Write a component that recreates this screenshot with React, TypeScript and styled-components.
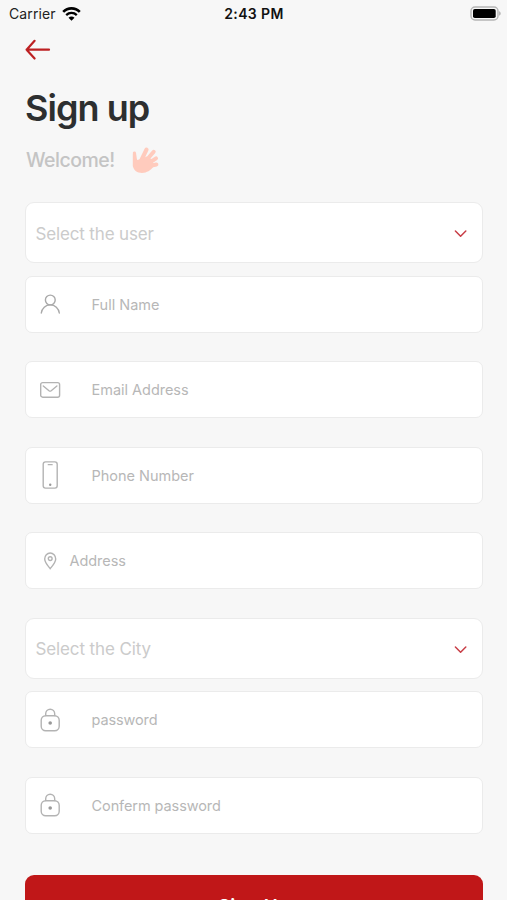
import React from "react";
import styled, { createGlobalStyle } from "styled-components";

const GlobalStyle = createGlobalStyle`
  * { box-sizing: border-box; }
  html, body { margin: 0; background: #f7f7f7; }
  body { font-family: Inter, "Liberation Sans", sans-serif; overflow: hidden; }
`;

const Screen = styled.main`
  width: 507px;
  height: 900px;
  overflow: hidden;
  background: #f7f7f7;
`;

const StatusBar = styled.div`
  display: grid;
  grid-template-columns: 1fr auto 1fr;
  align-items: center;
  height: 27px;
  padding: 0 6px 0 9px;
  color: #111;
`;

const Carrier = styled.div`
  display: flex;
  align-items: center;
  gap: 6px;
  font-size: 14px;
  letter-spacing: 0.1px;
  color: #222;
`;

const Clock = styled.div`
  padding-right: 2px;
  font-size: 14px;
  font-weight: 600;
  letter-spacing: 0.4px;
`;

const BatterySlot = styled.div`
  display: flex;
  justify-content: flex-end;
`;

const Content = styled.div`
  display: flex;
  flex-direction: column;
  padding: 0 24.5px 0 25px;
`;

const BackButton = styled.button`
  display: flex;
  width: 26px;
  height: 22px;
  margin-top: 12px;
  padding: 0;
  border: 0;
  background: none;
`;

const Title = styled.h1`
  margin: 25px 0 0;
  font-size: 36px;
  line-height: 44px;
  font-weight: 600;
  letter-spacing: -0.95px;
  color: #2d2f30;
`;

const Welcome = styled.div`
  display: flex;
  align-items: center;
  gap: 17.5px;
  height: 28px;
  margin-top: 16px;
  padding-left: 1px;
  font-size: 19.5px;
  font-weight: 500;
  letter-spacing: -0.5px;
  color: #c4c4c4;
`;

const Form = styled.form`
  display: flex;
  flex-direction: column;
  margin-top: 28px;
`;

const SelectBox = styled.div`
  display: flex;
  align-items: center;
  justify-content: space-between;
  height: 61px;
  margin-bottom: 12.5px;
  padding: 2px 14px 0 9.5px;
  border: 1px solid #ebebeb;
  border-radius: 9px;
  background: #fff;
  font-size: 17px;
  color: #cbcbcb;
`;

const SelectLabel = styled.span<{ $spacing: number }>`
  letter-spacing: ${(p) => p.$spacing}px;
`;

const Field = styled.label`
  display: flex;
  align-items: center;
  height: 57px;
  margin-bottom: 28.5px;
  padding-left: 9px;
  border: 1px solid #ebebeb;
  border-radius: 7px;
  background: #fff;
`;

const IconSlot = styled.span`
  display: flex;
  justify-content: center;
  width: 30px;
`;

const FieldText = styled.span<{ $compact?: boolean; $spacing: number }>`
  margin-left: ${(p) => (p.$compact ? 4.5 : 26.5)}px;
  font-size: 14.5px;
  letter-spacing: ${(p) => p.$spacing}px;
  color: #b7b7b7;
`;

const Submit = styled.button`
  height: 64px;
  margin-top: 12.5px;
  padding: 0;
  border: 0;
  border-radius: 9px;
  background: #c01718;
  color: #fff;
  font: 600 19px/64px Inter, sans-serif;
`;

const WifiIcon = () => (
  <svg width="19" height="14" viewBox="0 0 19 14" fill="none" stroke="#000">
    <path d="M1.2 4.9C5.8.2 13.2.2 17.8 4.9" strokeWidth="2.6" />
    <path d="M4.2 8.1c3-2.9 7.6-2.9 10.6 0" strokeWidth="2.3" />
    <path d="M9.5 13.7 6.5 10.7c1.7-1.5 4.3-1.5 6 0Z" fill="#000" stroke="none" />
  </svg>
);

const BatteryIcon = () => (
  <svg width="31" height="15" viewBox="0 0 31 15">
    <rect x="1" y="1" width="27" height="13" rx="4" fill="#f7f7f7" stroke="#b5b5b5" strokeWidth="1.4" />
    <rect x="3" y="3" width="22.7" height="9" rx="1.8" fill="#000" />
    <path d="M29.2 5.3c1.9.7 1.9 3.7 0 4.4Z" fill="#aaa" />
  </svg>
);

const BackIcon = () => (
  <svg width="26" height="22" viewBox="0 0 26 22" fill="none" stroke="#bd2022" strokeWidth="2.2" strokeLinecap="round" strokeLinejoin="round">
    <path d="M24 10.7H1.6M9.6 1.8l-8 8.9 8 8.8" />
  </svg>
);

const HandIcon = () => (
  <svg width="27" height="28" viewBox="0 0 27 28" fill="none" stroke="#ffcbbd" strokeLinecap="round" strokeLinejoin="round">
    <path d="M2.4 7 4 18" strokeWidth="3.2" />
    <path d="M9 15 14.500 3.700" strokeWidth="4.200" />
    <path d="M12 17l9.700-11.200M14 19l10-6.600M15 20.500l9.400-2" strokeWidth="4" />
    <path d="M.8 8v12c1 4.500 4.500 6.900 9.200 6.900 5 0 8.500-2.300 11.500-6.300l-1-7-6-3-5 2.500-4.500 1Z" fill="#ffcbbd" stroke="none" />
  </svg>
);

const ChevronIcon = () => (
  <svg width="14" height="9" viewBox="0 0 14 9" fill="none" stroke="#c83d46" strokeWidth="1.5" strokeLinecap="round" strokeLinejoin="round">
    <path d="m1.4 2 5.2 5.2L11.8 2" />
  </svg>
);

const lineIcon = { fill: "none", stroke: "#b3b3b3", strokeWidth: 1.4, strokeLinecap: "round", strokeLinejoin: "round" } as const;

const UserIcon = () => (
  <svg width="22" height="22" viewBox="0 0 22 22" {...lineIcon} stroke="#a9a9a9">
    <circle cx="11.3" cy="7" r="4.9" />
    <path d="M2.3 20c.6-4.7 4.3-8.1 9-8.1s8.400 3.400 9 8.100" />
  </svg>
);

const MailIcon = () => (
  <svg width="22" height="18" viewBox="0 0 22 18" {...lineIcon}>
    <rect x="1.7" y="1.6" width="18.9" height="14.6" rx="2" />
    <path d="m4.3 5 5.7 4.7c.7.5 1.5.5 2.2 0L17.900 5" />
  </svg>
);

const PhoneIcon = () => (
  <svg width="18" height="30" viewBox="0 0 18 30" {...lineIcon}>
    <rect x="2.2" y="1.9" width="14" height="26.200" rx="2.300" />
    <path d="M7.200 4.700h4" strokeWidth="1.200" />
    <circle cx="9.200" cy="24.800" r="1.200" fill="#999" stroke="none" />
  </svg>
);

const PinIcon = () => (
  <svg width="16" height="20" viewBox="0 0 16 20" {...lineIcon}>
    <path d="M8.200 17.700C6.100 15 2.700 11.200 2.700 7.900a5.500 5.900 0 0 1 11 0c0 3.300-3.400 7.100-5.500 9.800Z" />
    <circle cx="8.200" cy="7.600" r="1.900" />
  </svg>
);

const LockIcon = () => (
  <svg width="22" height="24" viewBox="0 0 22 24" {...lineIcon}>
    <rect x="2.200" y="7.800" width="18" height="15" rx="4.500" />
    <path d="M6.700 7.600V5.700a4.500 4.500 0 0 1 9 0v1.900" />
    <circle cx="11.200" cy="15" r="1.800" fill="#999" stroke="none" />
  </svg>
);

type InputRowProps = { icon: React.ReactNode; text: string; spacing: number; compact?: boolean };

const InputRow = ({ icon, text, spacing, compact }: InputRowProps) => (
  <Field>
    <IconSlot>{icon}</IconSlot>
    <FieldText $spacing={spacing} $compact={compact}>{text}</FieldText>
  </Field>
);

const SelectRow = ({ text, spacing }: { text: string; spacing: number }) => (
  <SelectBox>
    <SelectLabel $spacing={spacing}>{text}</SelectLabel>
    <ChevronIcon />
  </SelectBox>
);

export default function App() {
  return (
    <Screen>
      <GlobalStyle />
      <StatusBar>
        <Carrier>Carrier <WifiIcon /></Carrier>
        <Clock>2:43 PM</Clock>
        <BatterySlot><BatteryIcon /></BatterySlot>
      </StatusBar>
      <Content>
        <BackButton aria-label="Back"><BackIcon /></BackButton>
        <Title>Sign up</Title>
        <Welcome>Welcome! <HandIcon /></Welcome>
        <Form>
          <SelectRow text="Select the user" spacing={-0.15} />
          <InputRow icon={<UserIcon />} text="Full Name" spacing={0} />
          <InputRow icon={<MailIcon />} text="Email Address" spacing={-0.02} />
          <InputRow icon={<PhoneIcon />} text="Phone Number" spacing={-0.02} />
          <InputRow icon={<PinIcon />} text="Address" spacing={-0.05} compact />
          <SelectRow text="Select the City" spacing={-0.12} />
          <InputRow icon={<LockIcon />} text="password" spacing={-0.12} />
          <InputRow icon={<LockIcon />} text="Conferm password" spacing={-0.08} />
          <Submit type="button">Sign Up</Submit>
        </Form>
      </Content>
    </Screen>
  );
}
